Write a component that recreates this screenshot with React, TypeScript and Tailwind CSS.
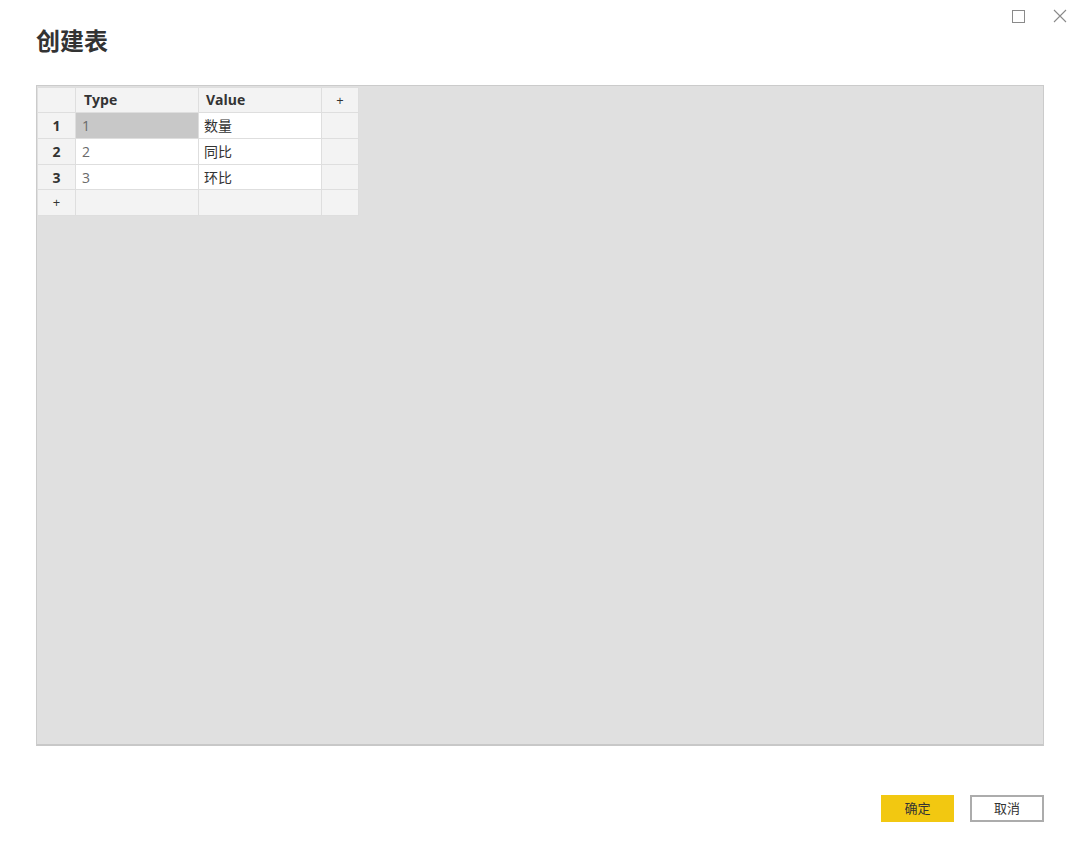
import React from "react";

const font = { fontFamily: '"Open Sans", "Noto Sans CJK SC", sans-serif' };

export default function App() {
  const rows = [
    { n: "1", t: "1", v: "数量", sel: true },
    { n: "2", t: "2", v: "同比" },
    { n: "3", t: "3", v: "环比" },
  ];
  const cellB = "border-r border-b border-[#dedede]";
  return (
    <div className="w-[1080px] h-[859px] bg-white relative text-[#333]" style={font}>
      <div className="absolute right-[13px] top-[9px] flex items-center gap-[28px]">
        <div className="w-[13px] h-[13px] border border-[#8a8a8a]" />
        <svg width="14" height="14" viewBox="0 0 14 14">
          <path d="M1 1 L13 13 M13 1 L1 13" stroke="#8a8a8a" strokeWidth="1.1" />
        </svg>
      </div>
      <div className="flex flex-col pl-[36px] pr-[36px]">
        <h1 className="text-[24px] font-bold leading-none pt-[29px] pb-0 text-[#333]">创建表</h1>
        <div className="mt-[32px] h-[661px] bg-[#e0e0e0] border border-[#cbcbcb] border-b-2 border-b-[#c8c8c8] pl-px pt-px">
          <div className="grid grid-cols-[38px_123px_123px_37px] w-[321px] text-[14px] border-t border-[#dedede]">
            <div className={`${cellB} bg-[#f3f3f3] h-[25px]`} />
            <div className={`${cellB} bg-[#f3f3f3] h-[25px] font-bold pl-[8px] leading-[24px]`}>Type</div>
            <div className={`${cellB} bg-[#f3f3f3] h-[25px] font-bold pl-[7px] leading-[24px]`}>Value</div>
            <div className={`${cellB} bg-[#f3f3f3] h-[25px] text-center text-[13px] leading-[24px]`}>+</div>
            {rows.map((r) => (
              <React.Fragment key={r.n}>
                <div className={`${cellB} bg-[#f3f3f3] h-[25.8px] font-bold text-center leading-[25px]`}>{r.n}</div>
                <div className={`${cellB} ${r.sel ? "bg-[#c8c8c8]" : "bg-white"} h-[25.8px] pl-[6px] leading-[25px] text-[#6a6a6a]`}>{r.t}</div>
                <div className={`${cellB} bg-white h-[25.8px] pl-[5px] leading-[25px] text-[#333]`}>{r.v}</div>
                <div className={`${cellB} bg-[#f3f3f3] h-[25.8px]`} />
              </React.Fragment>
            ))}
            <div className={`${cellB} bg-[#f3f3f3] h-[26px] text-center text-[13px] leading-[25px]`}>+</div>
            <div className={`${cellB} bg-[#f3f3f3] h-[26px]`} />
            <div className={`${cellB} bg-[#f3f3f3] h-[26px]`} />
            <div className={`${cellB} bg-[#f3f3f3] h-[26px]`} />
          </div>
        </div>
        <div className="flex justify-end gap-[16px] mt-[49px]">
          <button className="w-[73px] h-[27px] bg-[#f2c811] text-[13px] text-[#333] leading-none">确定</button>
          <button className="w-[74px] h-[27px] bg-white border-2 border-[#acacac] text-[13px] text-[#333] leading-none">取消</button>
        </div>
      </div>
    </div>
  );
}
